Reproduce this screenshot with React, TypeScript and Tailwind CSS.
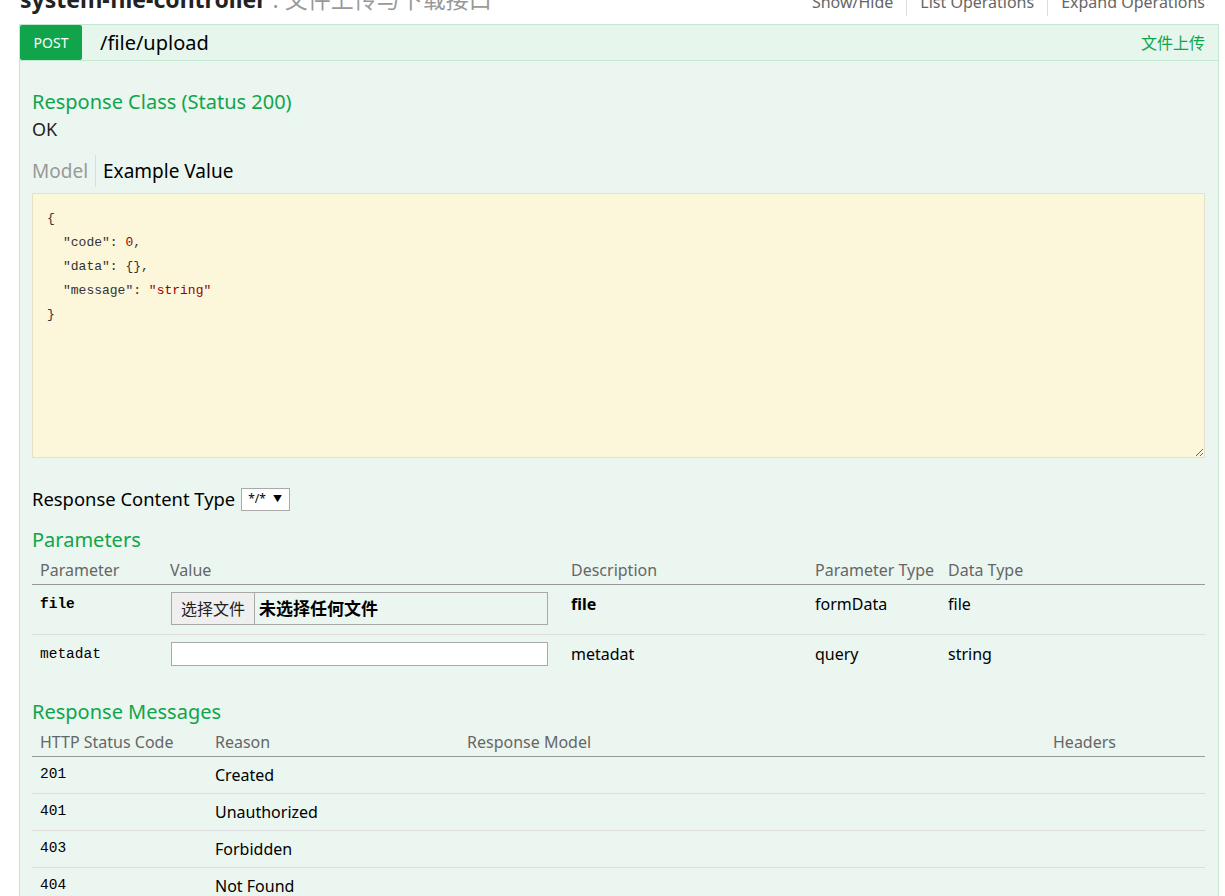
const sans = "font-['Noto_Sans','Noto_Sans_CJK_SC',sans-serif]"
const mono = "font-['Liberation_Mono','DejaVu_Sans_Mono',monospace]"

const params = [
  { name: "file", bold: true, desc: "file", paramType: "formData", dataType: "file" },
  { name: "metadat", bold: false, desc: "metadat", paramType: "query", dataType: "string" },
]

const messages = [
  { code: "201", reason: "Created" },
  { code: "401", reason: "Unauthorized" },
  { code: "403", reason: "Forbidden" },
  { code: "404", reason: "Not Found" },
]

const App = () => {
  return (
    <div className={`bg-white min-h-screen overflow-hidden ${sans}`}>
      {/* resource heading, scrolled partly out of view */}
      <div className="flex items-baseline justify-between h-[28px] -mt-[15px] mb-[11px] pl-[20px] pr-[20px]">
        <h2 className="text-[23px] leading-[28px] font-bold text-[#222]">
          system-file-controller
          <span className="font-normal text-[#999]"> : 文件上传与下载接口</span>
        </h2>
        <ul className="flex items-baseline text-[16px] leading-[28px] text-[#666]">
          <li className="pr-[13px]">Show/Hide</li>
          <li className="px-[13px] border-l border-[#ddd]">List Operations</li>
          <li className="pl-[13px] border-l border-[#ddd]">Expand Operations</li>
        </ul>
      </div>

      <div className="ml-[19px] w-[1200px] border border-[#c3e8d1] border-b-0">
        <div className="flex items-center h-[36px] bg-[#e7f6ec] border-b border-[#c3e8d1]">
          <span className="flex items-center justify-center w-[62px] h-[35px] bg-[#10a54a] text-white text-[14px] rounded-[2px]">
            POST
          </span>
          <span className="ml-[18px] text-[20px] text-black">/file/upload</span>
          <span className="ml-auto mr-[13px] text-[16px] text-[#10a54a]">文件上传</span>
        </div>

        <div className="bg-[#ebf6f0] pl-[12px] pr-[13px] pt-[29px] pb-[20px]">
          <h4 className="text-[20px] leading-[24px] text-[#10a54a]">Response Class (Status 200)</h4>
          <div className="mt-[3px] text-[18px] leading-[24px] text-[#222]">OK</div>

          <div className="flex items-center h-[32px] mt-[14px] text-[19px]">
            <span className="pr-[7px] text-[#999]">Model</span>
            <span className="h-full flex items-center pl-[7px] border-l border-[#ddd] text-black">Example Value</span>
          </div>

          <div
            className={`mt-[6px] h-[265px] resize overflow-auto bg-[#fcf6db] border border-[#e5e0c6] px-[14px] pt-[13px] text-[13px] leading-[24px] text-[#333] ${mono}`}
          >
            <div>{"{"}</div>
            <div className="pl-[16px]">
              "code": <span className="text-[#990000]">0</span>,
            </div>
            <div className="pl-[16px]">"data": {"{}"},</div>
            <div className="pl-[16px]">
              "message": <span className="text-[#990000]">"string"</span>
            </div>
            <div>{"}"}</div>
          </div>

          <div className="flex items-center mt-[29px] h-[24px] text-[18.4px] text-black">
            <span>Response Content Type</span>
            <span className="ml-[6px] flex items-center h-[23px] w-[49px] pl-[6px] bg-white border border-[#a9a9a9] text-[12px] text-black">
              */*
              <span className="ml-[7px] text-[9px]">▼</span>
            </span>
          </div>

          <h4 className="mt-[17px] text-[20px] leading-[24px] text-[#10a54a]">Parameters</h4>
          <div className="mt-[4px]">
            <div className="grid grid-cols-[130px_401px_244px_133px_1fr] h-[29px] items-center border-b border-[#999] text-[16px] text-[#666]">
              <span className="pl-[8px]">Parameter</span>
              <span className="pl-[8px]">Value</span>
              <span className="pl-[8px]">Description</span>
              <span className="pl-[8px]">Parameter Type</span>
              <span className="pl-[8px]">Data Type</span>
            </div>
            {params.map((p, i) => (
              <div
                key={p.name}
                className={`grid grid-cols-[130px_401px_244px_133px_1fr] pt-[7px] text-[16px] leading-[24px] text-black ${
                  i === 0 ? "h-[50px] border-b border-[#ddd]" : "h-[38px]"
                }`}
              >
                <span className={`pl-[8px] text-[14.5px] ${mono} ${p.bold ? "font-bold" : ""}`}>{p.name}</span>
                <span className="pl-[9px]">
                  {i === 0 ? (
                    <span className="flex items-center h-[33px] w-[377px] border border-[#a9a9a9]">
                      <span className="flex items-center h-[31px] px-[9px] bg-[#efefef] border-r border-[#a9a9a9] text-[16px] text-[#222]">
                        选择文件
                      </span>
                      <span className="ml-[4px] font-bold text-[17px]">未选择任何文件</span>
                    </span>
                  ) : (
                    <span className="block h-[24px] w-[377px] bg-white border border-[#a9a9a9]" />
                  )}
                </span>
                <span className={`pl-[8px] ${p.bold ? "font-bold" : ""}`}>{p.desc}</span>
                <span className="pl-[8px]">{p.paramType}</span>
                <span className="pl-[8px]">{p.dataType}</span>
              </div>
            ))}
          </div>

          <h4 className="mt-[27px] text-[20px] leading-[24px] text-[#10a54a]">Response Messages</h4>
          <div className="mt-[4px]">
            <div className="grid grid-cols-[175px_252px_586px_1fr] h-[29px] items-center border-b border-[#999] text-[16px] text-[#666]">
              <span className="pl-[8px]">HTTP Status Code</span>
              <span className="pl-[8px]">Reason</span>
              <span className="pl-[8px]">Response Model</span>
              <span className="pl-[8px]">Headers</span>
            </div>
            {messages.map((m) => (
              <div
                key={m.code}
                className="grid grid-cols-[175px_252px_586px_1fr] h-[37px] items-center border-b border-[#ddd] text-[16px] text-black"
              >
                <span className={`pl-[8px] text-[14.5px] ${mono}`}>{m.code}</span>
                <span className="pl-[8px]">{m.reason}</span>
                <span />
                <span />
              </div>
            ))}
          </div>
        </div>
      </div>
    </div>
  )
}

export default App
